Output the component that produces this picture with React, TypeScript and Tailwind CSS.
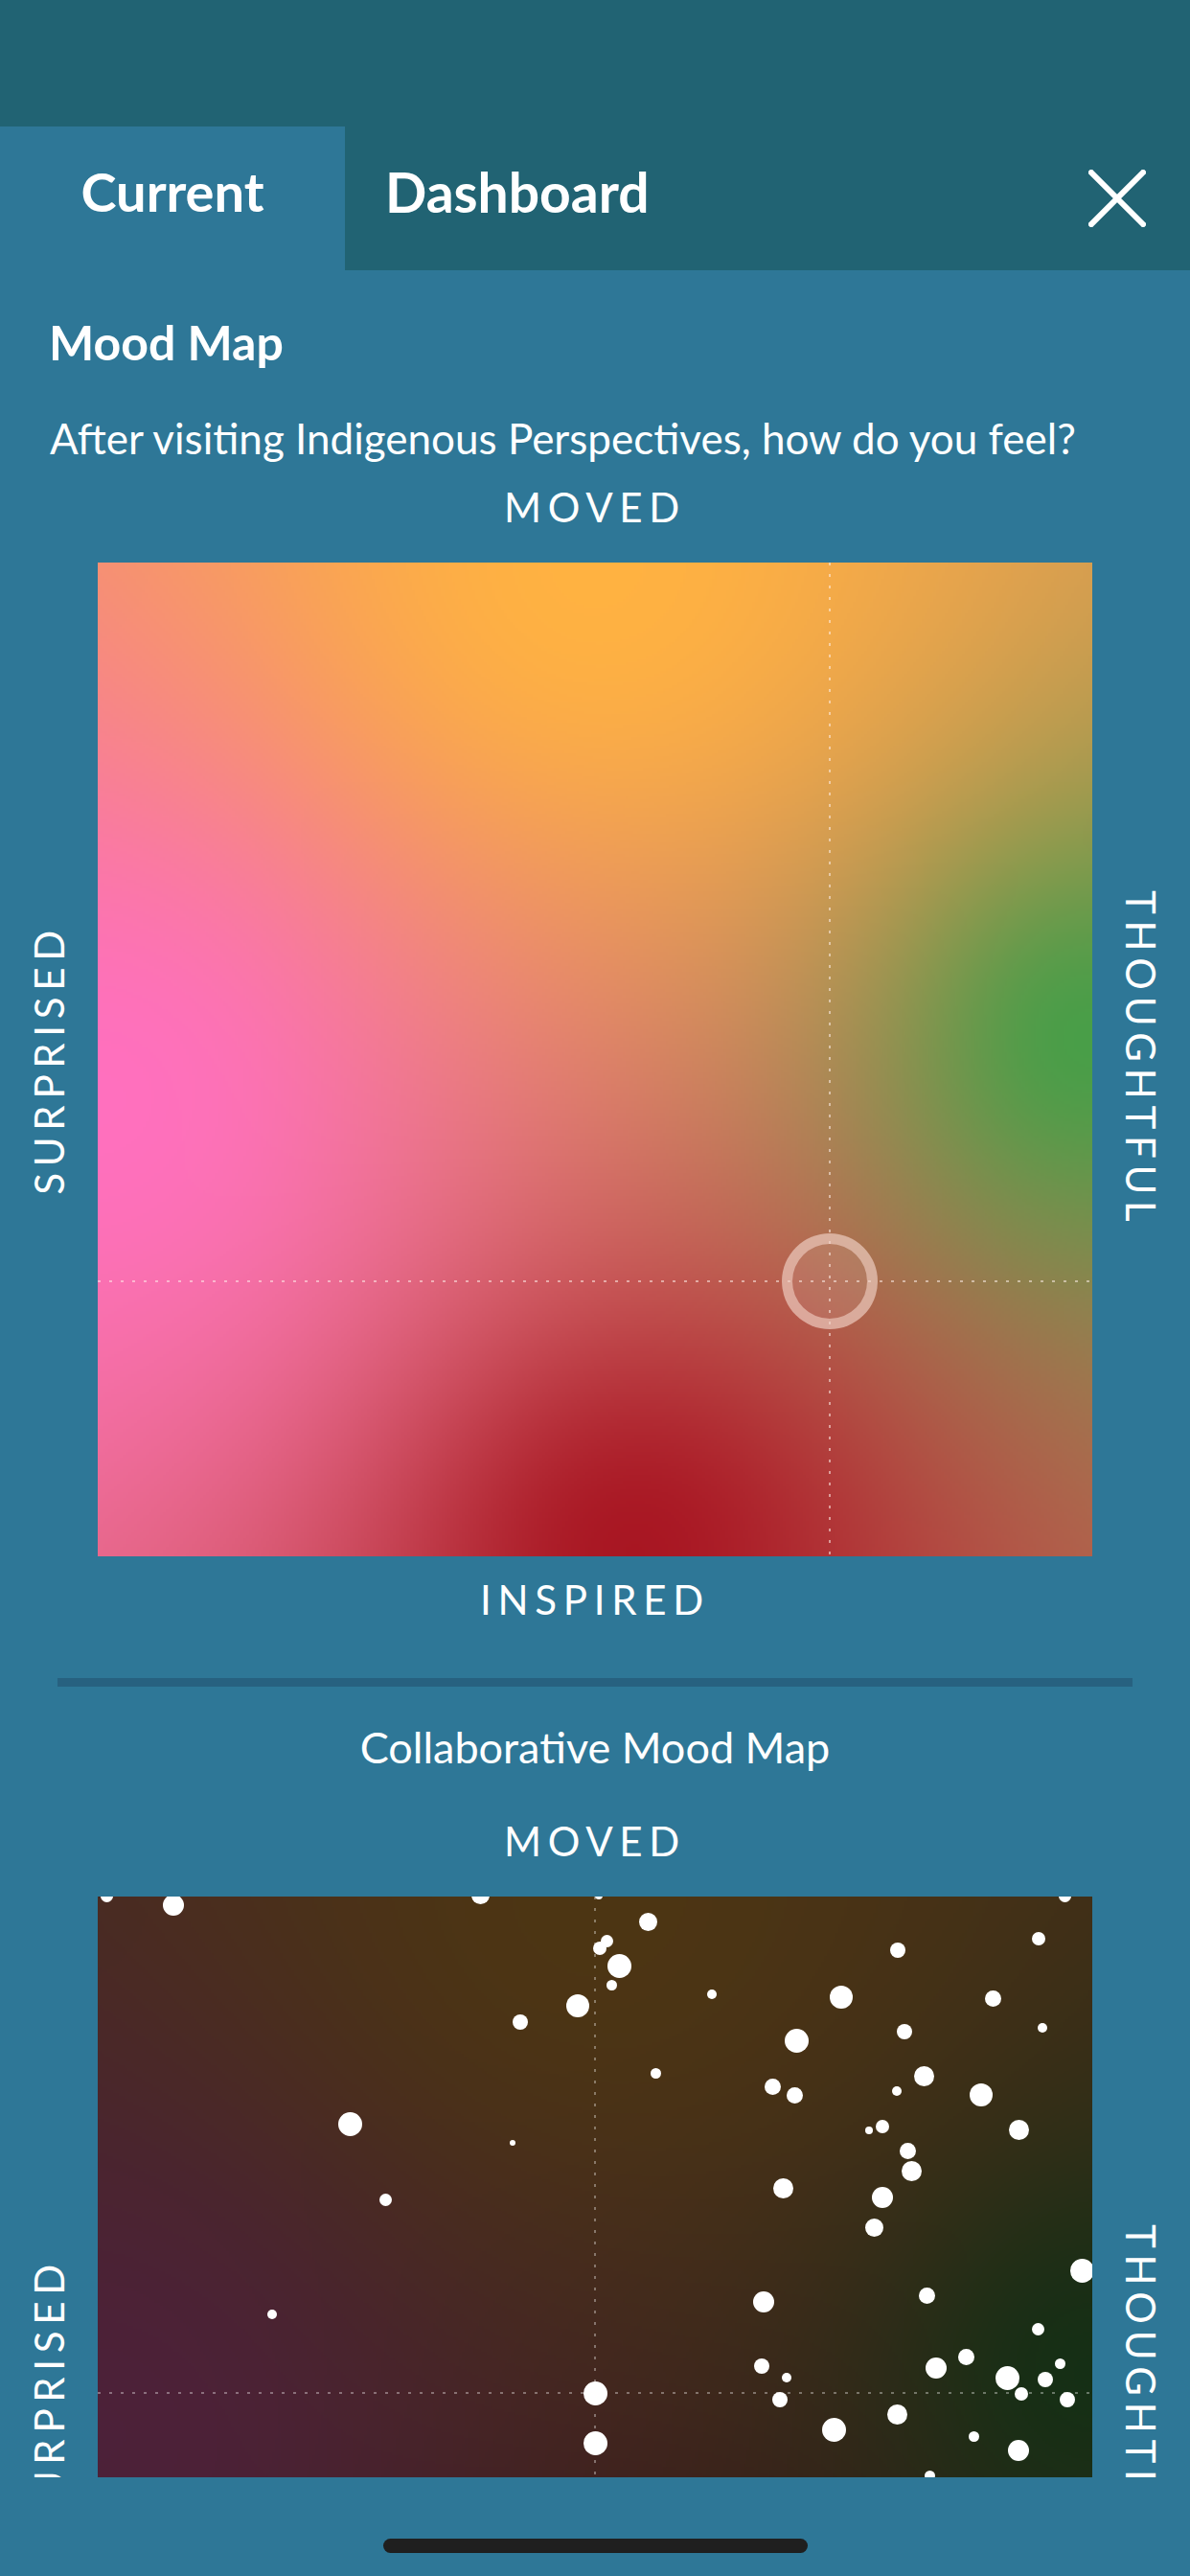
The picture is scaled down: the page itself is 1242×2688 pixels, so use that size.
import { useEffect, useRef } from 'react';

// anchor colours of the mood field: [x, y, r, g, b, strength]
const anchors = [
  [0.5, 0, 255, 178, 65, 1.4],
  [0, 0.54, 255, 112, 190, 1.3],
  [1, 0.48, 72, 158, 72, 0.4],
  [0.54, 1, 168, 22, 34, 0.55],
];

// collaborative entries: [x, y, diameter] inside the 1038px map
const dots: [number, number, number][] = [
  [9, -1, 13], [79, 9, 22], [399, -2, 19], [523, -1, 8], [1009, -1, 13],
  [574, 26, 19], [531, 46, 13], [524, 54, 14], [544, 72, 25], [536, 92, 11],
  [501, 114, 24], [441, 131, 16], [641, 102, 10], [776, 105, 24], [835, 56, 16],
  [982, 44, 14], [934, 106, 17], [842, 141, 16], [986, 137, 10], [729, 150, 25],
  [582, 184, 11], [704, 198, 17], [727, 207, 17], [834, 203, 10], [862, 187, 21],
  [922, 207, 24], [961, 243, 21], [819, 240, 14], [805, 244, 8], [845, 265, 17],
  [849, 286, 21], [715, 304, 21], [819, 314, 22], [810, 345, 19], [263, 237, 25],
  [433, 257, 6], [300, 316, 13], [1027, 390, 25], [695, 423, 22], [865, 416, 17],
  [182, 436, 10], [981, 451, 13], [693, 490, 16], [719, 502, 10], [875, 492, 22],
  [906, 480, 17], [1004, 487, 11], [949, 502, 25], [989, 504, 16], [964, 519, 14],
  [1012, 525, 16], [519, 518, 25], [712, 525, 16], [834, 540, 21], [768, 556, 25],
  [519, 570, 25], [914, 563, 11], [961, 578, 22], [868, 604, 11],
];

function MoodField() {
  const ref = useRef<HTMLCanvasElement>(null);

  useEffect(() => {
    const canvas = ref.current;
    if (!canvas) return;
    const ctx = canvas.getContext('2d');
    if (!ctx) return;
    const size = canvas.width;
    const img = ctx.createImageData(size, size);
    for (let j = 0; j < size; j++) {
      for (let i = 0; i < size; i++) {
        const x = i / (size - 1);
        const y = j / (size - 1);
        let r = 0, g = 0, b = 0, t = 0;
        for (const a of anchors) {
          const d2 = (x - a[0]) ** 2 + (y - a[1]) ** 2 + 0.0004;
          const w = a[5] / d2;
          r += a[2] * w;
          g += a[3] * w;
          b += a[4] * w;
          t += w;
        }
        const k = (j * size + i) * 4;
        img.data[k] = r / t;
        img.data[k + 1] = g / t;
        img.data[k + 2] = b / t;
        img.data[k + 3] = 255;
      }
    }
    ctx.putImageData(img, 0, 0);
  }, []);

  return <canvas ref={ref} width={346} height={346} className="absolute inset-0 h-full w-full" />;
}

function AxisLabel({ children, className = '' }: { children: string; className?: string }) {
  return (
    <span className={`text-[42px] leading-none font-normal tracking-[0.16em] text-white ${className}`}>
      {children}
    </span>
  );
}

function MapRow({ children }: { children: React.ReactNode }) {
  return (
    <div className="flex">
      <div className="flex w-[102px] shrink-0 items-center justify-center">
        <AxisLabel className="rotate-180 [writing-mode:vertical-rl]">SURPRISED</AxisLabel>
      </div>
      <div className="relative h-[1037px] w-[1038px] shrink-0 overflow-hidden">{children}</div>
      <div className="flex w-[102px] shrink-0 items-center justify-center">
        <AxisLabel className="[writing-mode:vertical-rl]">THOUGHTFUL</AxisLabel>
      </div>
    </div>
  );
}

function Crosshair({ x, y, color }: { x: number; y: number; color: string }) {
  return (
    <svg className="absolute inset-0" width="1038" height="1037">
      <line x1={x} y1="0" x2={x} y2="1037" stroke={color} strokeWidth="2" strokeDasharray="3 9" />
      <line x1="0" y1={y} x2="1038" y2={y} stroke={color} strokeWidth="2" strokeDasharray="3 9" />
    </svg>
  );
}

export default function App() {
  return (
    <div
      className="flex h-[2688px] w-[1242px] flex-col overflow-hidden bg-[#2e7797] text-white"
      style={{ fontFamily: 'Lato, "Open Sans", sans-serif' }}
    >
      <div className="h-[132px] shrink-0 bg-[#216373]" />

      <div className="flex h-[150px] shrink-0 items-center bg-[#216373]">
        <div className="flex h-full w-[360px] items-center justify-center bg-[#2e7797]">
          <span className="pb-[14px] text-[56px] leading-none font-bold">Current</span>
        </div>
        <span className="ml-[42px] pb-[14px] text-[57px] leading-none font-bold">Dashboard</span>
        <button className="mr-[46px] ml-auto flex h-[60px] w-[60px] items-center justify-center">
          <svg width="60" height="60" viewBox="0 0 60 60">
            <path d="M3 3 L57 57 M57 3 L3 57" stroke="white" strokeWidth="6" strokeLinecap="square" />
          </svg>
        </button>
      </div>

      <div className="flex min-h-0 flex-1 flex-col overflow-hidden">
        <h1 className="mt-[50px] px-[51px] text-[50px] leading-none font-bold">Mood Map</h1>
        <p className="mt-[53px] px-[52px] text-[44px] leading-none">
          After visiting Indigenous Perspectives, how do you feel?
        </p>

        <div className="mt-[29px] flex justify-center">
          <AxisLabel>MOVED</AxisLabel>
        </div>
        <div className="mt-[37px]">
          <MapRow>
            <MoodField />
            <Crosshair x={764} y={750} color="rgba(255,240,235,0.55)" />
            <div className="absolute top-[700px] left-[714px] h-[100px] w-[100px] rounded-full border-[11px] border-[#f2d2c6]/60 bg-white/10" />
          </MapRow>
        </div>
        <div className="mt-[24px] flex justify-center">
          <AxisLabel>INSPIRED</AxisLabel>
        </div>

        <div className="mx-[60px] mt-[61px] h-[9px] shrink-0 bg-[#276180]" />

        <p className="mt-[41px] text-center text-[45px] leading-none">Collaborative Mood Map</p>
        <div className="mt-[54px] flex justify-center">
          <AxisLabel>MOVED</AxisLabel>
        </div>
        <div className="mt-[37px]">
          <MapRow>
            <MoodField />
            <div className="absolute inset-0 bg-black/70" />
            <Crosshair x={519} y={518} color="rgba(255,255,255,0.35)" />
            {dots.map(([x, y, d], i) => (
              <div
                key={i}
                className="absolute rounded-full bg-white"
                style={{ left: x - d / 2, top: y - d / 2, width: d, height: d }}
              />
            ))}
          </MapRow>
        </div>
      </div>

      <div className="flex h-[103px] shrink-0 items-start justify-center pt-[64px]">
        <div className="h-[15px] w-[443px] rounded-full bg-[#1f1f1f]" />
      </div>
    </div>
  );
}
